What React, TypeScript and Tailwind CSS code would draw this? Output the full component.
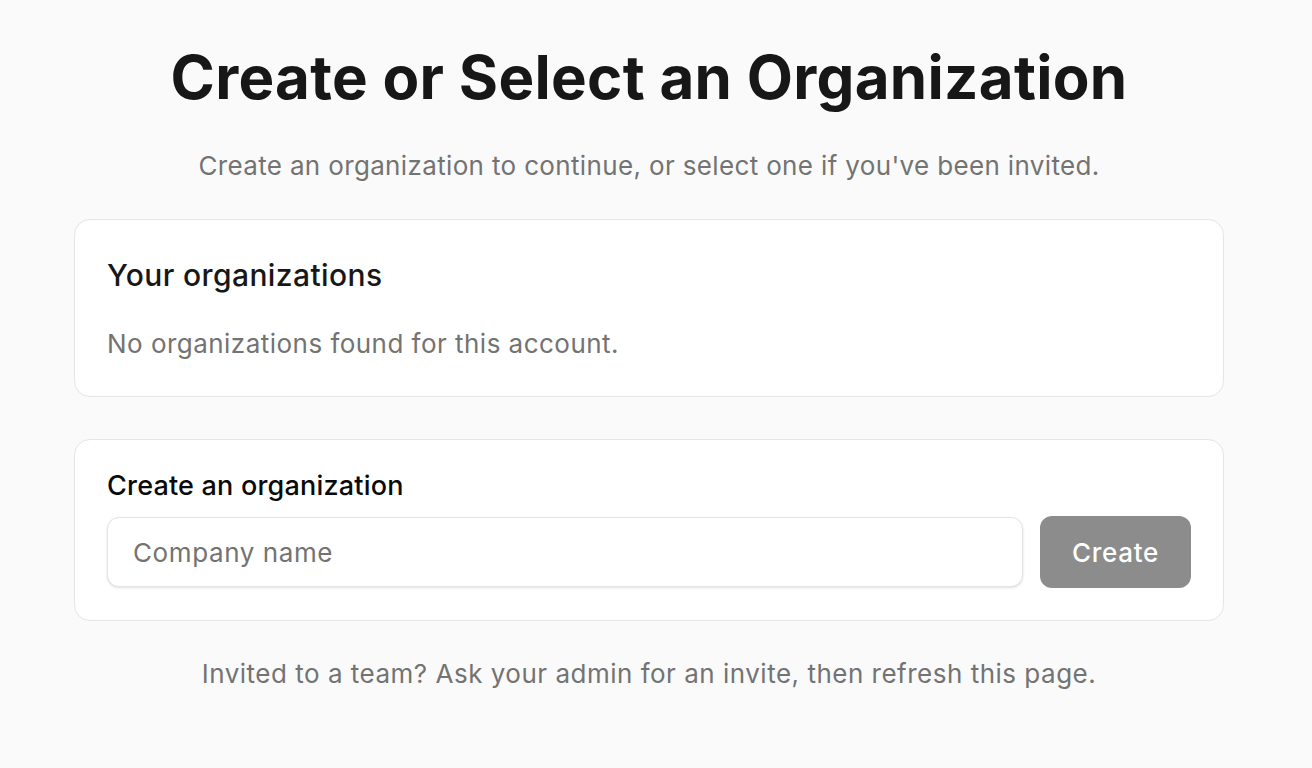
const App = () => {
  return (
    <div className="min-h-screen bg-[#fafafa] font-['Inter',sans-serif] text-[#171717]">
      <main className="ml-[74px] flex w-[1150px] flex-col pt-[47px]">
        <h1 className="text-center text-[60px] font-bold leading-[60px] tracking-[0.3px]">
          Create or Select an Organization
        </h1>
        <p className="mt-[43px] text-center text-[26px] leading-[32px] tracking-[0.35px] text-[#737373]">
          Create an organization to continue, or select one if you've been invited.
        </p>

        <section className="mt-[37px] rounded-[16px] border border-[#e5e5e5] bg-white px-[32px] pb-[36px] pt-[37px]">
          <h2 className="text-[30px] font-medium leading-[36px] tracking-[0.4px]">Your organizations</h2>
          <p className="mt-[35px] text-[26px] leading-[32px] tracking-[0.47px] text-[#737373]">
            No organizations found for this account.
          </p>
        </section>

        <section className="mt-[42px] rounded-[16px] border border-[#e5e5e5] bg-white px-[32px] pb-[32px] pt-[30px]">
          <h2 className="text-[27px] font-medium leading-[32px] tracking-[0.2px] text-[#0a0a0a]">
            Create an organization
          </h2>
          <div className="mt-[14px] flex items-center gap-[17px]">
            <input
              type="text"
              placeholder="Company name"
              className="h-[70px] flex-1 rounded-[12px] border border-[#e5e5e5] bg-white px-[25px] text-[26px] tracking-[0.6px] text-[#171717] shadow-sm outline-none placeholder:text-[#737373]"
            />
            <button
              type="button"
              disabled
              className="h-[72px] w-[151px] rounded-[12px] bg-[#8c8c8c] text-[26px] font-medium tracking-[0.7px] text-white"
            >
              Create
            </button>
          </div>
        </section>

        <p className="mt-[37px] text-center text-[26px] leading-[32px] tracking-[0.5px] text-[#737373]">
          Invited to a team? Ask your admin for an invite, then refresh this page.
        </p>
      </main>
    </div>
  );
};

export default App;
